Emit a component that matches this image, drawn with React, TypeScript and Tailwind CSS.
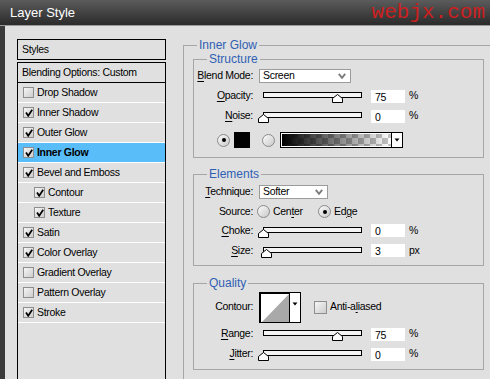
import type { ReactNode } from 'react';

const items = [
    { label: 'Drop Shadow', checked: false },
    { label: 'Inner Shadow', checked: true },
    { label: 'Outer Glow', checked: true },
    { label: 'Inner Glow', checked: true, active: true },
    { label: 'Bevel and Emboss', checked: true },
    { label: 'Contour', checked: true, sub: true },
    { label: 'Texture', checked: true, sub: true },
    { label: 'Satin', checked: true },
    { label: 'Color Overlay', checked: true },
    { label: 'Gradient Overlay', checked: false },
    { label: 'Pattern Overlay', checked: false },
    { label: 'Stroke', checked: true },
];

function Checkbox({ checked, big }: { checked: boolean; big?: boolean }) {
    return (
        <span className={`flex shrink-0 items-center justify-center border border-[#8e8e8e] bg-gradient-to-br from-[#f6f6f6] to-[#cdcdcd] ${big ? 'h-[13px] w-[13px]' : 'h-[11px] w-[11px]'}`}>
            {checked && (
                <svg width="8" height="8" viewBox="0 0 8 8">
                    <path d="M1 3.5 L3.2 6.8 L7.2 0.8" fill="none" stroke="#000" strokeWidth="1.7" />
                </svg>
            )}
        </span>
    );
}

function Radio({ on }: { on?: boolean }) {
    return (
        <span className="flex h-[13px] w-[13px] shrink-0 items-center justify-center rounded-full border border-[#8a8a8a] bg-gradient-to-br from-[#fbfbfb] to-[#c9c9c9]">
            {on && <span className="h-[4px] w-[4px] rounded-full bg-black" />}
        </span>
    );
}

function Chevron() {
    return (
        <svg width="8" height="6" viewBox="0 0 8 6">
            <path d="M0.8 0.8 L4 4.8 L7.2 0.8" fill="none" stroke="#7c7c7c" strokeWidth="1.9" />
        </svg>
    );
}

function Select({ value, width }: { value: string; width: string }) {
    return (
        <div className={`ml-[6px] flex h-[14px] items-center justify-between border border-[#9c9c9c] bg-white pl-[3px] pr-[4px] ${width}`}>
            <span>{value}</span>
            <Chevron />
        </div>
    );
}

function Slider({ pos }: { pos: number }) {
    return (
        <div className="relative ml-[5px] h-[14px] w-[109px] shrink-0">
            <div className="absolute left-[5px] top-[3px] h-[6px] w-[99px] border border-black bg-[#f4f4f4]" />
            <svg className="absolute top-[5px]" style={{ left: Math.round(pos * 0.99) }} width="11" height="9" viewBox="0 0 11 9">
                <path d="M5.5 0.5 L10.5 4.5 V8.5 H0.5 V4.5 Z" fill="#fff" stroke="#000" />
            </svg>
        </div>
    );
}

function Field({ value, unit }: { value: string; unit: string }) {
    return (
        <>
            <div className="ml-[4px] h-[13px] w-[34px] bg-white pl-[4px] leading-[14px]">{value}</div>
            <span className="ml-[4px]">{unit}</span>
        </>
    );
}

function Label({ children }: { children: ReactNode }) {
    return <span className="w-[59px] shrink-0 whitespace-nowrap text-right">{children}</span>;
}

function U({ children }: { children: ReactNode }) {
    return <span className="underline underline-offset-[2px]">{children}</span>;
}

function SliderRow({ label, pos, value, unit, h }: { label: ReactNode; pos: number; value: string; unit: string; h: string }) {
    return (
        <div className={`flex items-center ${h}`}>
            <Label>{label}</Label>
            <Slider pos={pos} />
            <Field value={value} unit={unit} />
        </div>
    );
}

function Group({ title, className, children }: { title: string; className?: string; children: ReactNode }) {
    return (
        <fieldset className={`w-[291px] border border-[#a6a6a6] ${className ?? ''}`}>
            <legend className="ml-[13px] px-[2px] text-[12px] leading-[13px] tracking-normal text-[#2f5fb4]">{title}</legend>
            {children}
        </fieldset>
    );
}

export default function App() {
    return (
        <div className="flex h-[379px] w-[490px] flex-col overflow-hidden bg-[#e0e0e0] font-['Liberation_Sans',Arial,sans-serif] text-[10.5px] tracking-[-0.3px] text-black">
            <div className="flex h-[26px] shrink-0 items-center justify-between border-b border-[#9a9a9a] bg-gradient-to-b from-[#5c5c5c] to-[#2b2b2b] pl-[10px] pr-[5px] tracking-normal">
                <span className="text-[13px] text-white">Layer Style</span>
                <span className="font-['Liberation_Mono',monospace] text-[21px] leading-none text-[#cc2020]">webjx.com</span>
            </div>

            <div className="flex flex-1 border-l-[5px] border-[#3a3a3a] pl-[12px] pt-[13px]">
                <div className="flex w-[149px] shrink-0 flex-col">
                    <div className="flex h-[21px] items-center border border-black pl-[4px]">Styles</div>
                    <div className="mt-[2px] h-[400px] border border-black">
                        <div className="flex h-[20px] items-center border-b border-black pl-[4px]">Blending Options: Custom</div>
                        {items.map((it) => (
                            <div
                                key={it.label}
                                className={`flex h-[20px] items-center gap-[3px] border-b border-white ${it.sub ? 'pl-[16px]' : 'pl-[5px]'} ${it.active ? 'bg-[#59bdf9] font-bold' : ''}`}
                            >
                                <Checkbox checked={it.checked} />
                                <span>{it.label}</span>
                            </div>
                        ))}
                    </div>
                </div>

                <fieldset className="ml-[17px] flex-1 border-l border-t border-[#a6a6a6]">
                    <legend className="ml-[13px] px-[2px] text-[12px] leading-[13px] tracking-normal text-[#2f5fb4]">Inner Glow</legend>
                    <div className="pl-[9px] pt-[1px]">
                        <Group title="Structure" className="pb-[9px]">
                            <div className="flex h-[20px] items-center">
                                <Label>
                                    <U>B</U>lend Mode:
                                </Label>
                                <Select value="Screen" width="w-[92px]" />
                            </div>
                            <SliderRow h="h-[20px]" label={<><U>O</U>pacity:</>} pos={75} value="75" unit="%" />
                            <SliderRow h="h-[20px]" label={<><U>N</U>oise:</>} pos={0} value="0" unit="%" />
                            <div className="mt-[6px] flex h-[16px] items-center pl-[23px]">
                                <Radio on />
                                <span className="ml-[4px] h-[16px] w-[16px] bg-black" />
                                <span className="ml-[12px]">
                                    <Radio />
                                </span>
                                <svg className="ml-[5px]" width="123" height="16" viewBox="0 0 123 16">
                                    <defs>
                                        <pattern id="chk" width="12" height="12" patternUnits="userSpaceOnUse">
                                            <rect width="12" height="12" fill="#fff" />
                                            <rect width="6" height="6" fill="#c4c4c4" />
                                            <rect x="6" y="6" width="6" height="6" fill="#c4c4c4" />
                                        </pattern>
                                        <linearGradient id="fade" x1="0" x2="1" y1="0" y2="0">
                                            <stop offset="0" stopColor="#000" stopOpacity="1" />
                                            <stop offset="1" stopColor="#000" stopOpacity="0" />
                                        </linearGradient>
                                    </defs>
                                    <rect x="0.5" y="0.5" width="122" height="15" fill="#fff" stroke="#000" />
                                    <rect x="2" y="2" width="109" height="12" fill="url(#chk)" />
                                    <rect x="2" y="2" width="109" height="12" fill="url(#fade)" />
                                    <line x1="111.5" y1="0" x2="111.5" y2="16" stroke="#000" />
                                    <path d="M114.5 6.5 H119.5 L117 9.5 Z" fill="#000" />
                                </svg>
                            </div>
                        </Group>

                        <Group title="Elements" className="mt-[10px] pb-[4px]">
                            <div className="flex h-[21px] items-center">
                                <Label>
                                    <U>T</U>echnique:
                                </Label>
                                <Select value="Softer" width="w-[69px]" />
                            </div>
                            <div className="flex h-[19px] items-center">
                                <Label>Source:</Label>
                                <div className="ml-[4px] flex w-[61px] items-center">
                                    <Radio />
                                    <span className="ml-[3px]">
                                        Cen<U>t</U>er
                                    </span>
                                </div>
                                <Radio on />
                                <span className="ml-[3px]">
                                    Ed<U>g</U>e
                                </span>
                            </div>
                            <SliderRow h="h-[19px]" label={<><U>C</U>hoke:</>} pos={0} value="0" unit="%" />
                            <SliderRow h="h-[21px]" label={<><U>S</U>ize:</>} pos={3} value="3" unit="px" />
                        </Group>

                        <Group title="Quality" className="mt-[11px] pb-[5px]">
                            <div className="flex h-[34px] items-center">
                                <Label>Contour:</Label>
                                <svg className="ml-[6px]" width="42" height="31" viewBox="0 0 42 31">
                                    <rect x="0.5" y="0.5" width="41" height="30" fill="#fff" stroke="#000" />
                                    <line x1="1.5" y1="1" x2="1.5" y2="30" stroke="#000" />
                                    <line x1="1" y1="1.5" x2="30" y2="1.5" stroke="#000" />
                                    <path d="M3 30 L30 2 V30 Z" fill="#a9a9a9" />
                                    <line x1="30.5" y1="0" x2="30.5" y2="31" stroke="#000" />
                                    <path d="M33.5 10.5 H38.5 L36 13.5 Z" fill="#000" />
                                </svg>
                                <span className="ml-[13px]">
                                    <Checkbox checked={false} big />
                                </span>
                                <span className="ml-[3px]">
                                    Anti-a<U>l</U>iased
                                </span>
                            </div>
                            <SliderRow h="h-[20px]" label={<><U>R</U>ange:</>} pos={75} value="75" unit="%" />
                            <SliderRow h="h-[20px]" label={<><U>J</U>itter:</>} pos={0} value="0" unit="%" />
                        </Group>
                    </div>
                </fieldset>
            </div>
        </div>
    );
}
